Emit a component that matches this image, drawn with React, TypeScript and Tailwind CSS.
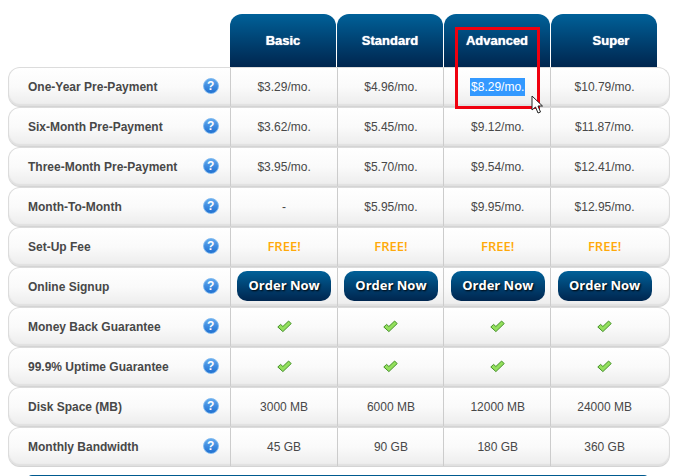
const plans = ['Basic', 'Standard', 'Advanced', 'Super'];

type Cell = string;

const rows: { label: string; cells: Cell[] }[] = [
  { label: 'One-Year Pre-Payment', cells: ['$3.29/mo.', '$4.96/mo.', '$8.29/mo.', '$10.79/mo.'] },
  { label: 'Six-Month Pre-Payment', cells: ['$3.62/mo.', '$5.45/mo.', '$9.12/mo.', '$11.87/mo.'] },
  { label: 'Three-Month Pre-Payment', cells: ['$3.95/mo.', '$5.70/mo.', '$9.54/mo.', '$12.41/mo.'] },
  { label: 'Month-To-Month', cells: ['-', '$5.95/mo.', '$9.95/mo.', '$12.95/mo.'] },
  { label: 'Set-Up Fee', cells: ['FREE!', 'FREE!', 'FREE!', 'FREE!'] },
  { label: 'Online Signup', cells: ['ORDER', 'ORDER', 'ORDER', 'ORDER'] },
  { label: 'Money Back Guarantee', cells: ['CHECK', 'CHECK', 'CHECK', 'CHECK'] },
  { label: '99.9% Uptime Guarantee', cells: ['CHECK', 'CHECK', 'CHECK', 'CHECK'] },
  { label: 'Disk Space (MB)', cells: ['3000 MB', '6000 MB', '12000 MB', '24000 MB'] },
  { label: 'Monthly Bandwidth', cells: ['45 GB', '90 GB', '180 GB', '360 GB'] },
];

function HelpIcon() {
  return (
    <span className="mb-0.5 flex h-4 w-4 items-center justify-center rounded-full border border-[#7db8f0] bg-gradient-to-b from-[#62aaee] to-[#1c6fd0] text-[12px] font-bold leading-none text-white">
      ?
    </span>
  );
}

function Check() {
  return (
    <svg width="15" height="13" viewBox="0 0 15 13" className="mb-0.5">
      <path
        d="M0.8 7 L3.6 4.4 L5.9 6.5 L11.6 1 L14.2 3.6 L5.9 11.6 Z"
        fill="#93e05c"
        stroke="#459028"
        strokeWidth="1"
        strokeLinejoin="round"
      />
    </svg>
  );
}

function CellContent({ value, selected }: { value: Cell; selected: boolean }) {
  if (value === 'ORDER') {
    return (
      <button className="mb-0.5 flex h-[30px] w-[94px] items-center justify-center rounded-[10px] bg-gradient-to-b from-[#006199] to-[#00264f] pb-px font-['Open_Sans',sans-serif] text-[13px] font-bold text-white [text-shadow:1px_1px_2px_#000]">
        Order Now
      </button>
    );
  }
  if (value === 'CHECK') return <Check />;
  if (value === 'FREE!') {
    return <span className="font-['Open_Sans',sans-serif] text-[13px] font-semibold text-[#ffa90a]">FREE!</span>;
  }
  if (selected) return <span className="bg-[#3399ff] px-px text-white">{value}</span>;
  return <span>{value}</span>;
}

export default function App() {
  return (
    <div className="relative h-[476px] w-[681px] overflow-hidden bg-white font-['Liberation_Sans',Arial,sans-serif] text-[12px] text-[#484848]">
      <div className="flex flex-col pl-2 pt-3.5">
        {/* Header */}
        <div className="flex pl-[222px]">
          {plans.map((plan) => (
            <div
              key={plan}
              className={`mr-px flex h-[53px] w-[106px] items-center justify-center rounded-t-[12px] bg-gradient-to-b from-[#006199] to-[#00264f] pt-px text-[13px] font-bold text-white [text-shadow:0_0_1px_#fff] ${plan === 'Super' ? 'pl-[14px]' : ''}`}
            >
              {plan}
            </div>
          ))}
        </div>

        {/* Rows */}
        {rows.map((row, i) => (
          <div
            key={row.label}
            className="flex h-10 w-[662px] rounded-[12px] border border-[#dcdcdc] border-b-[#d4d4d4] bg-gradient-to-b from-white via-[#fafafa] to-[#ececec] shadow-[inset_0_-2px_1px_#e0e0e0]"
          >
            <div className="flex w-[221px] items-center justify-between pl-[19px] pr-[11px] font-bold">
              <span>{row.label}</span>
              <HelpIcon />
            </div>
            {row.cells.map((cell, c) => (
              <div
                key={c}
                className={`flex items-center justify-center border-l border-[#cccccc] pl-px ${c === 3 ? 'w-[119px] pr-[12px]' : 'w-[107px]'}`}
              >
                <CellContent value={cell} selected={i === 0 && c === 2} />
              </div>
            ))}
          </div>
        ))}

        {/* Top edge of the button below the table */}
        <div className="ml-5 mt-2 h-4 w-[620px] rounded-t-[4px] bg-[#005a8f]" />
      </div>

      {/* Red annotation box */}
      <div className="absolute left-[455px] top-[27px] h-[82px] w-[85px] border-[3px] border-[#f0000f]" />

      {/* Mouse cursor */}
      <svg className="absolute left-[531px] top-[95px]" width="13" height="20" viewBox="0 0 13 20">
        <path d="M1 1 L1 15 L4.5 12 L7 18 L9.5 17 L7 11 L11.5 11 Z" fill="#fff" stroke="#222" strokeWidth="1" />
      </svg>
    </div>
  );
}
